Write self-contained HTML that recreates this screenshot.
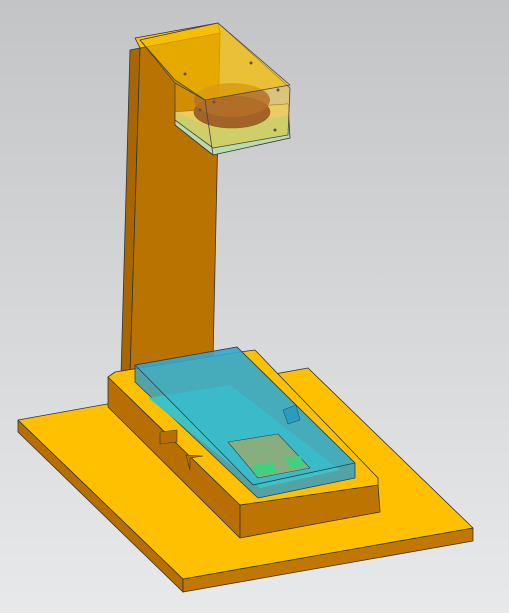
<!DOCTYPE html>
<html><head><meta charset="utf-8"><style>
html,body{margin:0;padding:0;width:509px;height:613px;overflow:hidden;background:linear-gradient(#c4c5c7,#e6e7e8);}
svg{display:block}
</style></head><body>
<svg width="509" height="613" viewBox="0 0 509 613" xmlns="http://www.w3.org/2000/svg" stroke-linejoin="round">
<defs>
<linearGradient id="bg" x1="0" y1="0" x2="0" y2="1"><stop offset="0" stop-color="#c3c4c6"/><stop offset="1" stop-color="#e8e9ea"/></linearGradient>
</defs>
<rect width="509" height="613" fill="url(#bg)"/>
<polygon points="18,420 183,579 183,592 18,432" fill="#b86f00" stroke="#333" stroke-width="0.8"/>
<polygon points="183,579 473,528 473,541 183,592" fill="#c07800" stroke="#333" stroke-width="0.8"/>
<polygon points="18,420 308,368 473,528 183,579" fill="#fec000" stroke="#333" stroke-width="0.8"/>
<polygon points="130,50 140,48 130,375 121,375" fill="#a86600" stroke="#333" stroke-width="0.8"/>
<polygon points="140,48 220,33 213,360 130,375" fill="#b97300" stroke="#333" stroke-width="0.8"/>
<polygon points="135,38 218,23 220,33 140,48" fill="#fec000" stroke="#333" stroke-width="0.8"/>
<polygon points="108,377 240,505 240,538 108,407" fill="#b86f00" stroke="#333" stroke-width="0.8"/>
<polygon points="240,505 378,485 380,512 240,538" fill="#bd7400" stroke="#333" stroke-width="0.8"/>
<polygon points="108,377 115,372 240,352 255,350 378,478 378,485 240,505" fill="#fec000" stroke="#333" stroke-width="0.8"/>
<polygon points="160,432 177,430 177,442 160,444" fill="#b86f00" stroke="#333" stroke-width="0.6"/>
<polygon points="186,455 190,470 190,458 203,456" fill="#b86f00" stroke="#333" stroke-width="0.6"/>
<polygon points="135,365 237,347 355,463 355,478 258,498 135,382" fill="#2a9ad0" fill-opacity="0.8" stroke="#245" stroke-width="0.8"/>
<polygon points="148,398 230,385 340,470 260,488" fill="#3cc8c8" fill-opacity="0.85"/>
<polygon points="135,365 237,347 355,463 253,485" fill="#38b4d0" fill-opacity="0.5" stroke="#245" stroke-width="0.8"/>
<polygon points="283,410 296,405 300,420 288,424" fill="#2a9cc0" stroke="#245" stroke-width="0.5"/>
<polygon points="228,442 278,434 310,468 258,478" fill="#a8a860" fill-opacity="0.7" stroke="#345" stroke-width="0.6"/>
<polygon points="252,465 272,462 278,472 256,476" fill="#40d080"/>
<polygon points="285,458 300,456 305,466 290,468" fill="#40d080"/>
<polygon points="175,112 288,104 290,138 213,155 175,125" fill="#b8dcb0" stroke="#333" stroke-width="0.8"/>
<polygon points="175,112 288,104 290,115 213,128" fill="#f0d8a0" fill-opacity="0.8"/>
<ellipse cx="232" cy="112" rx="38" ry="16" fill="#6a2a44" stroke="#333" stroke-width="0.6"/>
<ellipse cx="232" cy="100" rx="38" ry="17" fill="#8a4040" fill-opacity="0.85"/>
<polygon points="140,40 218,23 290,88 288,135 213,148 175,120 175,83" fill="#f6b800" fill-opacity="0.4" stroke="#444" stroke-width="0.8"/>
<polygon points="140,40 218,23 290,85 205,100 175,80" fill="#f8c000" fill-opacity="0.55" stroke="#444" stroke-width="0.8"/>
<line x1="175" y1="83" x2="205" y2="100" stroke="#444" stroke-width="0.8"/>
<line x1="205" y1="100" x2="213" y2="155" stroke="#444" stroke-width="0.8"/>
<g fill="#555"><circle cx="185" cy="74" r="1.5"/><circle cx="251" cy="63" r="1.5"/><circle cx="278" cy="90" r="1.5"/><circle cx="214" cy="102" r="1.5"/><circle cx="200" cy="110" r="1.5"/><circle cx="275" cy="130" r="1.5"/></g>
</svg>
</body></html>
